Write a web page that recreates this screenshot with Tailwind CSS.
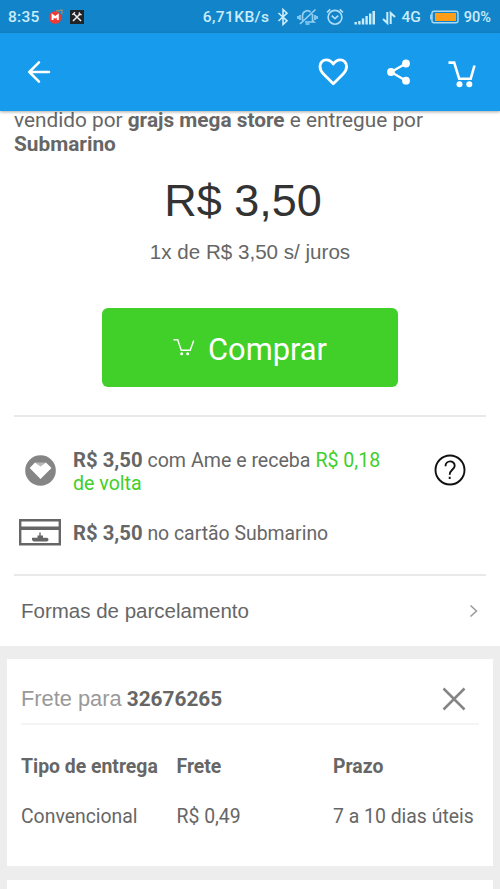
<!DOCTYPE html>
<html lang="pt-BR">
<head>
<meta charset="utf-8">
<title>Submarino</title>
<script src="https://cdn.jsdelivr.net/npm/@tailwindcss/browser@4"></script>
</head>
<body class="w-[500px] h-[889px] overflow-hidden bg-[#ededed] font-['Roboto',sans-serif] text-[#666] text-[20px]">
<div class="flex h-[889px] flex-col overflow-hidden whitespace-nowrap">
  <!-- Status bar -->
  <div class="flex h-[33px] shrink-0 items-center bg-[#1285ca] pl-[8px] pr-[9px] pt-[2px] text-[15.5px] font-medium text-[#c9ecfb]">
    <span class="w-[40px] tracking-[0.3px]">8:35</span>
    <svg class="-mt-[2px] h-[16px] w-[16px]" viewBox="0 0 16 16"><path d="M8 2L14 1V5" fill="none" stroke="#9a8a70" stroke-width="1.4"/><circle cx="7.2" cy="8.5" r="6.3" fill="#ee3b36"/><path d="M4.6 11V6.4L7.2 8.4L9.8 6.4V11" fill="none" stroke="#fff" stroke-width="2"/></svg>
    <svg class="-mt-[1px] ml-[6px] h-[14px] w-[14px]" viewBox="0 0 14 14"><path d="M0 0h14v14H0z" fill="#202427"/><path d="M3.5 3.5L11 11M10.5 3.5L3 11" stroke="#eee" stroke-width="1.5"/><path d="M2.3 4.8L5 2.3M9.3 2.3v2.3h2.4" fill="none" stroke="#eee" stroke-width="1.2"/></svg>
    <span class="ml-auto tracking-[0.4px]">6,71KB/s</span>
    <svg class="-mt-[1px] ml-[8px] h-[18px] w-[12px]" viewBox="0 0 12 18" fill="none" stroke="#c9ecfb" stroke-width="1.6"><path d="M1.5 5L10 12.8L6 16.5V1.5L10 5.2L1.5 13"/></svg>
    <svg class="-mt-[1px] ml-[8px] h-[18px] w-[21px]" viewBox="0 0 21 18" fill="none" stroke="#94d0f4" stroke-width="1.7"><path d="M5.5 12.5V7.5A4.8 4.8 0 0 1 13.5 4M15.5 6v6.5l1.5 1.5H8M8.5 16h4M3 7v5M1 8v3M18 7v5M20 8v3M18.500 1.500L3 16"/></svg>
    <svg class="-mt-[1px] ml-[8px] h-[18px] w-[18px]" viewBox="0 0 18 18" fill="none" stroke="#b0dff8" stroke-width="1.6"><circle cx="9" cy="9.3" r="6.9"/><path d="M1 4.3L4.3 1.3M13.7 1.3L17 4.3M5.7 7.7L9 10.6L12.3 7.7"/></svg>
    <svg class="ml-[10px] h-[15px] w-[21px]" viewBox="0 0 21 15" fill="#c9ecfb"><path d="M.5 12h2.400v2.500h-2.400zM4.200 11h2.400v3.500h-2.400zM7.800 8.500h2.400v6h-2.400zM11.400 6h2.400v8.500h-2.400zM15 3.500h2.400v11h-2.400zM18.500 1h2.500v13.500h-2.500z"/></svg>
    <svg class="ml-[7px] h-[14px] w-[14px]" viewBox="0 0 14 14" fill="none" stroke="#c9ecfb" stroke-width="2"><path d="M5.3 1v11L1 8M8.7 13V2L13 6"/></svg>
    <span class="ml-[5px]">4G</span>
    <svg class="-mt-[1px] ml-[9px] h-[14px] w-[29px]" viewBox="0 0 29 14"><path d="M0 4.5h2v5H0z" fill="#94d0f4"/><rect x="2" y="1.2" width="26" height="11.6" rx="2" fill="#1285ca" stroke="#a9daf4" stroke-width="1.4"/><path d="M5 3h21v8H5z" fill="#ff9d16"/></svg>
    <span class="ml-[5px] text-[14.5px]">90%</span>
  </div>
  <!-- App bar -->
  <div class="relative z-10 flex h-[78px] shrink-0 items-center bg-[#179bec] pl-[27px] pr-[22px] shadow-[0_1px_3px_rgba(0,0,0,0.35)]">
    <svg class="h-[24px] w-[24px]" viewBox="0 0 24 24" fill="none" stroke="#fff" stroke-width="2.5" stroke-linecap="round" stroke-linejoin="round"><path d="M22 12H2.3M12 2.3L2.3 12L12 21.7"/></svg>
    <svg class="ml-auto h-[30px] w-[32px]" viewBox="0 0 32 30" fill="none" stroke="#fff" stroke-width="2.8" stroke-linejoin="round"><path d="M17.3 26.700L7.500 17C5 14.500 4 12 4 9.300C4 5.700 6.800 2.800 10.300 2.800C13.300 2.800 15.500 4.200 17.300 7C19.100 4.200 21.300 2.800 24.300 2.800C27.800 2.800 30.600 5.700 30.600 9.300C30.600 12 29.600 14.500 27.100 17Z"/></svg>
    <svg class="ml-[37px] h-[26px] w-[26px]" viewBox="0 0 26 26"><path d="M21 4.500L6 13L21 21.700" fill="none" stroke="#fff" stroke-width="2.300"/><circle cx="21" cy="4.500" r="3.900" fill="#fff"/><circle cx="6" cy="13" r="3.900" fill="#fff"/><circle cx="21" cy="21.700" r="3.900" fill="#fff"/></svg>
    <svg class="relative top-[2px] ml-[37px] h-[28px] w-[30px]" viewBox="0 0 30 28"><path d="M.5 2.600H6.200L11.200 18.800H22.700L26.500 5.500" fill="none" stroke="#fff" stroke-width="2.600"/><circle cx="11.500" cy="24.300" r="3" fill="#fff"/><circle cx="21.300" cy="24.300" r="3" fill="#fff"/></svg>
  </div>
  <!-- Product offer -->
  <main class="h-[535px] shrink-0 bg-white px-[14px]">
    <p class="-mt-[3px] text-[20.8px] leading-[24px]">vendido por <b class="font-bold">grajs mega store</b> e entregue por<br><b class="font-bold">Submarino</b></p>
    <div class="mt-[17px] text-center font-['Liberation_Sans',sans-serif] text-[45px] leading-[56px] text-[#333] pr-[14px]">R$ 3,50</div>
    <div class="mt-[9px] text-center font-['Liberation_Sans',sans-serif] text-[20.6px] leading-[28px]">1x de R$ 3,50 s/ juros</div>
    <button class="mx-auto mt-[42px] flex h-[79px] w-[296px] items-center justify-center rounded-[6px] bg-[#41cf29] pt-[5px] text-[30.8px] text-white">
      <svg class="-mt-[6px] mr-[13px] h-[18px] w-[22px]" viewBox="0 0 22 18"><path d="M.5 1.700H4.700L8.200 12.200H17.200L20.700 2.500" fill="none" stroke="#fff" stroke-width="1.400"/><circle cx="8.700" cy="15.800" r="1.500" fill="#fff"/><circle cx="14.700" cy="15.800" r="1.500" fill="#fff"/></svg>
      <span>Comprar</span>
    </button>
    <div class="mt-[28px] h-[2px] bg-[#e9e9e9]"></div>
    <div class="mt-[32px] flex h-[46px] items-center pl-[11px]">
      <svg class="-mt-[4px] h-[31px] w-[31px] shrink-0" viewBox="0 0 31 31"><circle cx="15.500" cy="15.500" r="15.300" fill="#858585"/><path d="M10 7.500H21L15.500 12Z" fill="#b9b9b9"/><path d="M4.700 13L10 7.500L15.500 11.500L21 7.500L26.500 13L15.500 24Z" fill="#fff"/></svg>
      <p class="ml-[17px] text-[19.6px] leading-[23px]"><b class="text-[20.3px] font-bold">R$ 3,50</b> com Ame e receba <span class="text-[#41cf29]">R$ 0,18<br>de volta</span></p>
      <svg class="-mt-[4px] ml-auto mr-[20px] h-[32px] w-[32px]" viewBox="0 0 32 32" fill="none" stroke="#111" stroke-width="1.900"><circle cx="16" cy="16" r="14.500"/><path d="M11.500 12.200C11.500 5.800 20.700 6 20.700 11.700C20.700 15.500 15.700 15.800 15.700 20.800M15.700 22.800V25"/></svg>
    </div>
    <div class="mt-[22px] flex h-[32px] items-center pl-[5px]">
      <svg class="-mt-[1px] h-[28px] w-[42px] shrink-0" viewBox="0 0 42 28"><path d="M1.200 1.200H40.800V25.300H1.200Z" fill="none" stroke="#666" stroke-width="2.400"/><path d="M1 7.500h40v3.500H1z" fill="#666"/><path d="M13 18.700H18.500V16.500H20.300V13.500H21.700V16.500H24V18.700H27.500Q29.500 19 29.500 20.500Q29.500 22.500 26.500 22.500H15Q13.500 22.500 13 20.500Z" fill="#666"/></svg>
      <p class="ml-[12px] text-[19.4px]"><b class="text-[20.3px] font-bold">R$ 3,50</b> no cartão Submarino</p>
    </div>
    <div class="mt-[25px] h-[2px] bg-[#e9e9e9]"></div>
    <div class="flex h-[70px] items-center justify-between pl-[7px] pr-[8px] font-['Liberation_Sans',sans-serif] text-[20.5px]">
      <span>Formas de parcelamento</span>
      <svg class="h-[14px] w-[9px]" viewBox="0 0 9 14" fill="none" stroke="#999" stroke-width="1.500"><path d="M1.500 1.500L7.500 7L1.500 12.500"/></svg>
    </div>
  </main>
  <!-- Shipping -->
  <section class="mx-[7px] mt-[13px] h-[207px] shrink-0 bg-white px-[14px]">
    <div class="flex h-[66px] items-center justify-between border-b-2 border-[#f4f4f4] pr-[6px] pt-[16px]">
      <p class="text-[20.8px]"><span class="font-['Liberation_Sans',sans-serif] text-[21.800px] text-[#999]">Frete para</span> <b class="font-bold">32676265</b></p>
      <svg class="mr-[7px] h-[24px] w-[24px]" viewBox="0 0 24 24" fill="none" stroke="#858585" stroke-width="2.500"><path d="M1.500 1.500L22.500 22.500M22.500 1.500L1.500 22.500"/></svg>
    </div>
    <div class="mt-[17px] grid grid-cols-[155.5px_156.5px_1fr] text-[19.4px] leading-[50px]">
      <b class="font-bold">Tipo de entrega</b><b class="font-bold">Frete</b><b class="font-bold">Prazo</b>
      <span>Convencional</span><span>R$ 0,49</span><span>7 a 10 dias úteis</span>
    </div>
  </section>
  <section class="mx-[7px] mt-[14px] h-[20px] shrink-0 bg-white"></section>
</div>
</body>
</html>
